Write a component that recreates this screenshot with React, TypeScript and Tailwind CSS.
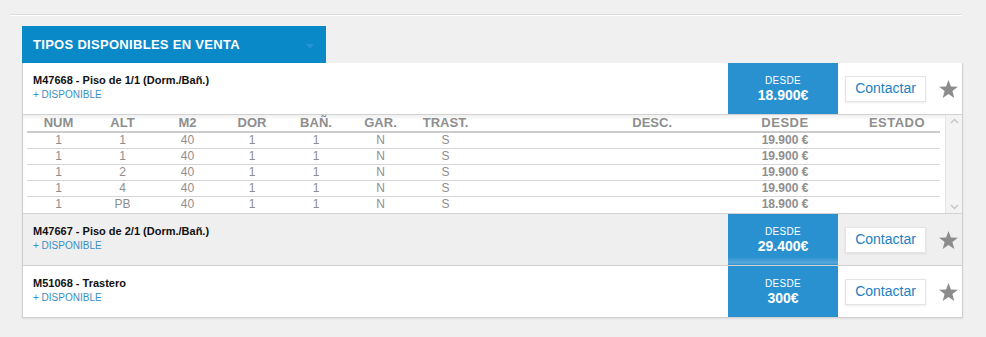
import type { ReactNode } from "react";

type Unit = { num: string; alt: string; m2: string; dor: string; ban: string; gar: string; tras: string; desde: string };

const units: Unit[] = [
  { num: "1", alt: "1", m2: "40", dor: "1", ban: "1", gar: "N", tras: "S", desde: "19.900 €" },
  { num: "1", alt: "1", m2: "40", dor: "1", ban: "1", gar: "N", tras: "S", desde: "19.900 €" },
  { num: "1", alt: "2", m2: "40", dor: "1", ban: "1", gar: "N", tras: "S", desde: "19.900 €" },
  { num: "1", alt: "4", m2: "40", dor: "1", ban: "1", gar: "N", tras: "S", desde: "19.900 €" },
  { num: "1", alt: "PB", m2: "40", dor: "1", ban: "1", gar: "N", tras: "S", desde: "18.900 €" },
];

const cols = "grid grid-cols-[63px_65px_65px_64px_64px_65px_65px_252px_110px_100px]";

function Star() {
  return (
    <svg width="19" height="18" viewBox="0 0 24 23" className="fill-[#8c8c8c]">
      <polygon points="12,0 15.1,8.3 24,8.7 17,14.2 19.4,23 12,18 4.6,23 7,14.2 0,8.7 8.9,8.3" />
    </svg>
  );
}

function TypeRow({ code, title, price, gray, top }: { code: string; title: string; price: string; gray?: boolean; top?: boolean }) {
  return (
    <div className={`flex ${gray ? "bg-[#efefef]" : "bg-white"} ${top ? "h-[51px]" : "h-[52px] border-t border-[#d2d2d2]"}`}>
      <div className="flex-1 pl-[10px] pt-[11px]">
        <div className="text-[11px] font-bold leading-[13px] text-[#111]">
          {code} - {title}
        </div>
        <div className="mt-[1px] text-[10px] leading-[13px] text-[#3a8fc6]">+ DISPONIBLE</div>
      </div>
      <div
        className={`flex w-[110px] flex-col items-center justify-center pt-[1px] text-white ${
          gray ? "bg-[linear-gradient(to_bottom,#2a91d0_85%,#5aa9da_96%,#2a91d0)]" : "bg-[#2a91d0]"
        }`}
      >
        <div className="text-[10px] leading-[12px] tracking-[0.3px]">DESDE</div>
        <div className="text-[14px] font-bold leading-[17px]">{price}</div>
      </div>
      <div className="flex items-center pl-[7px]">
        <button className="h-[26px] w-[81px] border border-[#e4e4e4] bg-white text-[14px] text-[#1c80c2] shadow-[0_1px_2px_rgba(0,0,0,0.08)]">
          Contactar
        </button>
      </div>
      <div className="flex w-[36px] items-center justify-center pl-[8px]">
        <Star />
      </div>
    </div>
  );
}

function Cell({ children, className = "" }: { children?: ReactNode; className?: string }) {
  return <div className={`text-center ${className}`}>{children}</div>;
}

function UnitsTable() {
  return (
    <div className="flex h-[99px] border-t border-[#d2d2d2] bg-white pl-[4px] shadow-[inset_0_3px_3px_rgba(0,0,0,0.06)]">
      <div className="w-[913px]">
        <div className={`${cols} h-[18px] border-b-2 border-[#cbcbcb] text-[13px] font-bold leading-[16px] text-[#8e8e8e]`}>
          <Cell>NUM</Cell>
          <Cell>ALT</Cell>
          <Cell>M2</Cell>
          <Cell>DOR</Cell>
          <Cell>BAÑ.</Cell>
          <Cell>GAR.</Cell>
          <Cell>TRAST.</Cell>
          <Cell className="pr-[58px] text-right">DESC.</Cell>
          <Cell className="tracking-[0.5px]">DESDE</Cell>
          <Cell className="pl-[14px] tracking-[0.5px]">ESTADO</Cell>
        </div>
        {units.map((u, i) => (
          <div
            key={i}
            className={`${cols} h-[16px] text-[12px] leading-[15px] text-[#8e8e8e] ${i < units.length - 1 ? "border-b border-[#d6d6d6]" : ""}`}
          >
            <Cell>{u.num}</Cell>
            <Cell>{u.alt}</Cell>
            <Cell>{u.m2}</Cell>
            <Cell>{u.dor}</Cell>
            <Cell>{u.ban}</Cell>
            <Cell>{u.gar}</Cell>
            <Cell>{u.tras}</Cell>
            <Cell />
            <Cell className="font-bold">{u.desde}</Cell>
            <Cell />
          </div>
        ))}
      </div>
      <div className="ml-[5px] flex w-[17px] flex-col items-center justify-between border-l border-[#e6e6e6] bg-[#f3f3f3] py-[3px]">
        <svg width="9" height="6" viewBox="0 0 9 6" className="stroke-[#c4c4c4]" fill="none">
          <path d="M1 5 L4.5 1.5 L8 5" strokeWidth="1.3" />
        </svg>
        <svg width="9" height="6" viewBox="0 0 9 6" className="stroke-[#c4c4c4]" fill="none">
          <path d="M1 1 L4.5 4.5 L8 1" strokeWidth="1.3" />
        </svg>
      </div>
    </div>
  );
}

export default function App() {
  return (
    <div className="h-[337px] w-full bg-[#f0f0f0] pt-[14px] font-['Liberation_Sans',Arial,sans-serif]">
      <div className="ml-[10px] w-[952px] border-t border-[#dcdcdc] border-b border-b-white" />
      <div className="ml-[22px] mt-[10px] w-[941px]">
        <div className="flex h-[37px] w-[304px] items-center justify-between bg-[#0a89c9] pl-[11px] pr-[12px]">
          <span className="text-[13px] font-bold tracking-[0.3px] text-white">TIPOS DISPONIBLES EN VENTA</span>
          <svg width="8" height="5" viewBox="0 0 8 5" className="mt-[4px] fill-[#2594d0]">
            <polygon points="0,0 8,0 4,5" />
          </svg>
        </div>
        <div className="border border-t-0 border-[#d0d0d0] shadow-[0_1px_2px_rgba(0,0,0,0.08)]">
          <TypeRow top code="M47668" title="Piso de 1/1 (Dorm./Bañ.)" price="18.900€" />
          <UnitsTable />
          <TypeRow gray code="M47667" title="Piso de 2/1 (Dorm./Bañ.)" price="29.400€" />
          <TypeRow code="M51068" title="Trastero" price="300€" />
        </div>
      </div>
    </div>
  );
}
